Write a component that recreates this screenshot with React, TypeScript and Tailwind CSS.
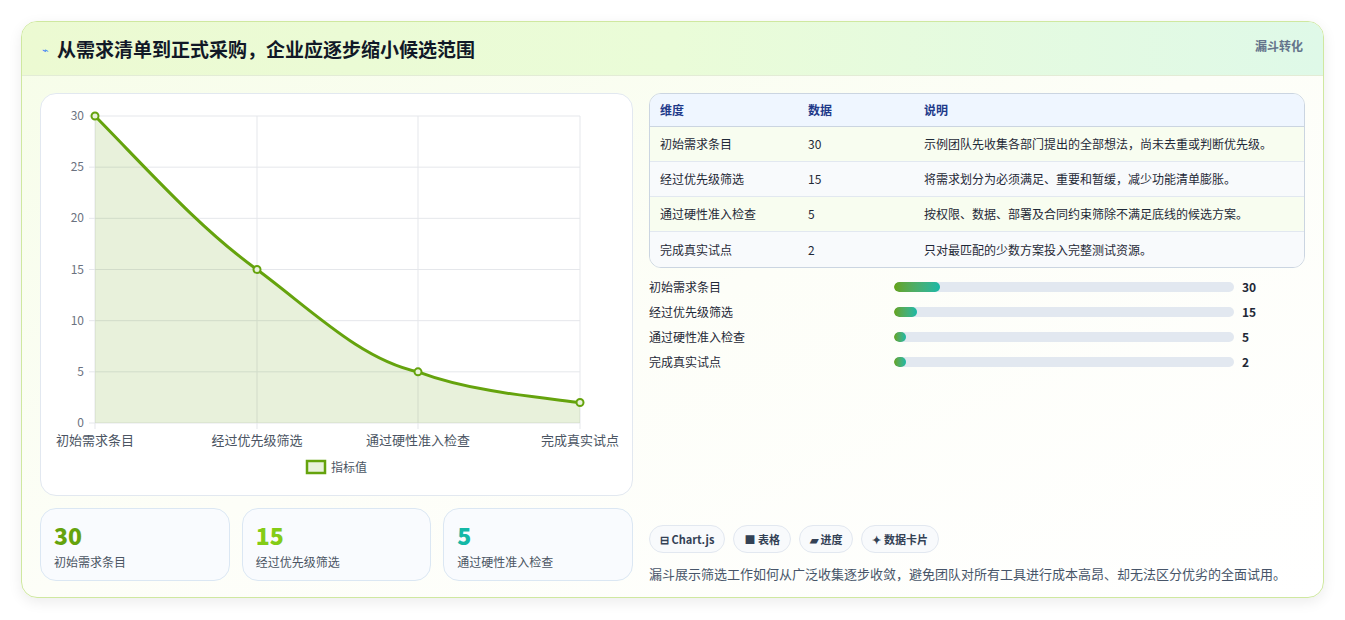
import React from "react";

const F = { fontFamily: '"Noto Sans CJK SC", "Noto Sans", sans-serif' };

const rows = [
  ["初始需求条目", "30", "示例团队先收集各部门提出的全部想法，尚未去重或判断优先级。"],
  ["经过优先级筛选", "15", "将需求划分为必须满足、重要和暂缓，减少功能清单膨胀。"],
  ["通过硬性准入检查", "5", "按权限、数据、部署及合同约束筛除不满足底线的候选方案。"],
  ["完成真实试点", "2", "只对最匹配的少数方案投入完整测试资源。"],
];
const bars = [["初始需求条目", 30, 46], ["经过优先级筛选", 15, 23], ["通过硬性准入检查", 5, 12], ["完成真实试点", 2, 12]];

function Chart() {
  const xs = [54, 216, 377, 539];
  const y = (v: number) => 329 - (v / 30) * 307;
  const line = `M54 ${y(30)} C108 ${y(30) + 55} 160 ${y(15) - 40} 216 ${y(15)} C270 ${y(15) + 40} 320 ${y(5) - 12} 377 ${y(5)} C430 ${y(5) + 20} 500 ${y(2) - 5} 539 ${y(2)}`;
  return (
    <svg width="593" height="402" className="block">
      {[0, 5, 10, 15, 20, 25, 30].map((v) => (
        <g key={v}>
          <line x1={48} x2={539} y1={y(v)} y2={y(v)} stroke="#e5e7eb" />
          <text x={43} y={y(v) + 4} textAnchor="end" fontSize="12" fill="#6b7280" style={F}>{v}</text>
        </g>
      ))}
      {xs.map((x) => <line key={x} x1={x} x2={x} y1={22} y2={335} stroke="#e5e7eb" />)}
      <path d={`${line} L539 329 L54 329 Z`} fill="#65a30d" fillOpacity="0.15" />
      <path d={line} fill="none" stroke="#65a30d" strokeWidth="3" />
      {[30, 15, 5, 2].map((v, i) => <circle key={i} cx={xs[i]} cy={y(v)} r="3.5" fill="#e9f2dc" stroke="#65a30d" strokeWidth="2" />)}
      {["初始需求条目", "经过优先级筛选", "通过硬性准入检查", "完成真实试点"].map((t, i) => (
        <text key={t} x={xs[i]} y={351} textAnchor="middle" fontSize="13" fill="#4b5563" style={F}>{t}</text>
      ))}
      <rect x={266} y={367} width={18} height={12} fill="#e9f2dc" stroke="#65a30d" strokeWidth="2.5" />
      <text x={290} y={378} fontSize="12" fill="#4b5563" style={F}>指标值</text>
    </svg>
  );
}

export default function App() {
  return (
    <div className="w-[1345px] h-[620px] bg-white pt-[21px] pl-[21px]" style={F}>
      <div className="w-[1303px] h-[577px] rounded-2xl border border-[#cfe8a0] overflow-hidden shadow-[0_4px_14px_rgba(0,0,0,0.08)] bg-gradient-to-br from-[#f6fde8] via-[#fdfef8] to-white">
        <div className="h-[54px] flex items-start justify-between px-5 pt-[14px] bg-gradient-to-r from-[#ecfad2] via-[#eafcd8] to-[#dff9e8] border-b border-[#e3ecd6]">
          <div className="flex items-center gap-2">
            <span className="text-[#3b82f6] text-[11px]">⌁</span>
            <span className="text-[19px] font-bold text-[#111827] leading-[26px]">从需求清单到正式采购，企业应逐步缩小候选范围</span>
          </div>
          <span className="text-[12px] font-semibold text-[#64748b] mt-[1px]">漏斗转化</span>
        </div>
        <div className="flex gap-4 px-[18px] pt-[17px]">
          <div className="w-[593px] flex flex-col gap-3">
            <div className="h-[403px] rounded-2xl border border-[#e2e8f0] bg-white"><Chart /></div>
            <div className="flex gap-3">
              {[["30", "text-[#65a30d]", "初始需求条目"], ["15", "text-[#84cc16]", "经过优先级筛选"], ["5", "text-[#14b8a6]", "通过硬性准入检查"]].map(([n, c, l]) => (
                <div key={l} className="flex-1 h-[73px] rounded-2xl border border-[#dbe7f3] bg-[#f9fbfe] px-[13px] pt-[12px]">
                  <div className={`text-[23px] font-extrabold leading-[28px] ${c}`}>{n}</div>
                  <div className="text-[12px] leading-[16px] text-[#4b5563] mt-[5px]">{l}</div>
                </div>
              ))}
            </div>
          </div>
          <div className="w-[657px] flex flex-col">
            <div className="rounded-xl border border-[#cbd5e1] overflow-hidden text-[12px] leading-[16px]">
              <div className="flex h-[33px] items-center bg-[#eff6ff] border-b border-[#cbd5e1] font-semibold text-[#1e3a8a]">
                <div className="w-[158px] pl-[10px]">维度</div><div className="w-[116px]">数据</div><div>说明</div>
              </div>
              {rows.map((r, i) => (
                <div key={i} className={`flex h-[35px] items-center text-[#1f2937] ${i % 2 === 0 ? "bg-[#f8fdf0]" : "bg-[#f8fafc]"} ${i < 3 ? "border-b border-[#e2e8f0]" : ""}`}>
                  <div className="w-[158px] pl-[10px]">{r[0]}</div><div className="w-[116px]">{r[1]}</div><div>{r[2]}</div>
                </div>
              ))}
            </div>
            <div className="flex flex-col gap-[11px] mt-[12px]">
              {bars.map(([l, v, w]) => (
                <div key={l as string} className="flex items-center h-[14px] text-[12px] leading-[14px]">
                  <div className="w-[245px] text-[#1f2937]">{l}</div>
                  <div className="w-[340px] h-[10px] rounded-full bg-[#e2e8f0] overflow-hidden">
                    <div className="h-full rounded-full bg-gradient-to-r from-[#65a30d] to-[#14b8a6]" style={{ width: (w as number) + "px" }} />
                  </div>
                  <div className="ml-[8px] font-bold text-[#1f2937]">{v}</div>
                </div>
              ))}
            </div>
            <div className="flex gap-2 mt-[156px]">
              {["⊟ Chart.js", "■ 表格", "▰ 进度", "✦ 数据卡片"].map((t) => (
                <span key={t} className="h-[28px] px-[10px] rounded-full border border-[#e2e8f0] bg-[#f8fafc] text-[11px] font-semibold text-[#334155] flex items-center">{t}</span>
              ))}
            </div>
            <div className="mt-[12px] text-[13px] leading-[18px] text-[#475569]">漏斗展示筛选工作如何从广泛收集逐步收敛，避免团队对所有工具进行成本高昂、却无法区分优劣的全面试用。</div>
          </div>
        </div>
      </div>
    </div>
  );
}
